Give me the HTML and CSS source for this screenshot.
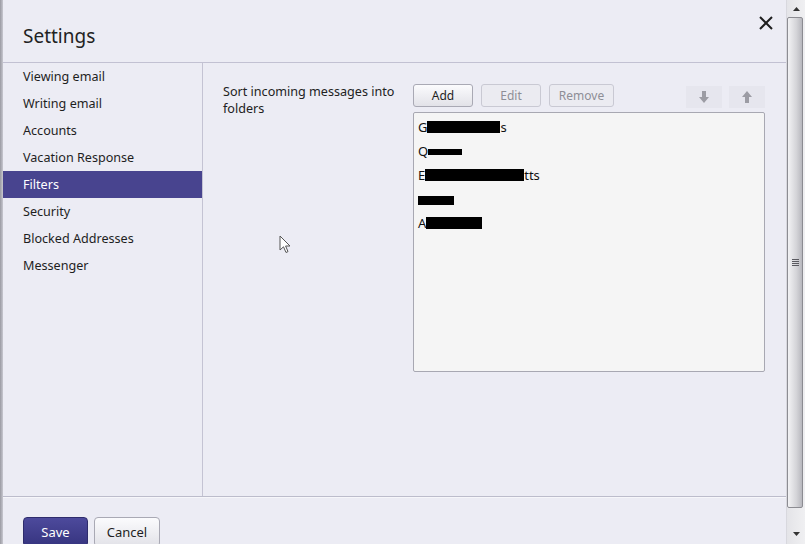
FILE: index.html
```html
<html lang="en">
	<head>
		<meta charset="utf-8" />
		<title>Settings</title>
		<link rel="stylesheet" href="styles.css">
	</head>

	<body>
		<div class="window">
			<div class="edge"></div>

			<div class="dialog">
				<div class="header">
					<h1 class="title">Settings</h1>
					<div class="close">
						<svg width="16" height="16" viewBox="0 0 16 16">
							<path d="M2 2 L14 14 M14 2 L2 14" stroke="#1e1e1e" stroke-width="2" fill="none" />
						</svg>
					</div>
				</div>

				<div class="main">
					<ul class="nav">
						<li>Viewing email</li>
						<li>Writing email</li>
						<li>Accounts</li>
						<li>Vacation Response</li>
						<li class="selected">Filters</li>
						<li>Security</li>
						<li>Blocked Addresses</li>
						<li>Messenger</li>
					</ul>

					<div class="content">
						<div class="label">Sort incoming messages into folders</div>

						<div class="filters">
							<div class="toolbar">
								<button class="btn">Add</button>
								<button class="btn disabled">Edit</button>
								<button class="btn disabled wide">Remove</button>
								<div class="spacer"></div>
								<button class="arrow">
									<svg width="12" height="12" viewBox="0 0 12 12">
										<path d="M4 0 H8 V6 H11 L6 12 L1 6 H4 Z" fill="#9c9ca4" />
									</svg>
								</button>
								<button class="arrow">
									<svg width="12" height="12" viewBox="0 0 12 12">
										<path d="M4 12 H8 V6 H11 L6 0 L1 6 H4 Z" fill="#9c9ca4" />
									</svg>
								</button>
							</div>

							<ul class="list">
								<li>G<span class="redact" style="width: 73px"></span>s</li>
								<li>Q<span class="redact thin" style="width: 34px"></span></li>
								<li>E<span class="redact" style="width: 99px"></span>tts</li>
								<li><span class="redact short" style="width: 36px"></span></li>
								<li>A<span class="redact" style="width: 56px"></span></li>
							</ul>
						</div>

						<svg class="cursor" width="14" height="20" viewBox="0 0 14 20">
							<path d="M1 1 L1 15 L4.5 11.8 L7 17.5 L9 16.6 L6.6 11 L11 11 Z" fill="#fff" stroke="#555" stroke-width="1" />
						</svg>
					</div>
				</div>

				<div class="footer">
					<button class="btn primary">Save</button>
					<button class="btn">Cancel</button>
				</div>
			</div>

			<div class="scrollbar">
				<div class="scroll-arrow">
					<svg width="7" height="4" viewBox="0 0 7 4"><path d="M0 4 L3.5 0 L7 4 Z" fill="#333" /></svg>
				</div>
				<div class="thumb">
					<div class="grip"></div>
				</div>
				<div class="scroll-arrow bottom">
					<svg width="7" height="4" viewBox="0 0 7 4"><path d="M0 0 L3.5 4 L7 0 Z" fill="#333" /></svg>
				</div>
			</div>
		</div>
	</body>
</html>
```

FILE: styles.css
```css
body {
	margin: 0;
	font-family: 'Noto Sans', 'Open Sans', Arial, sans-serif;
	font-size: 12.6px;
	color: #1e1e1e;
	background: #ececf4;
}

.window {
	display: flex;
	width: 805px;
	height: 544px;
	overflow: hidden;
}

.edge {
	width: 3px;
	background: linear-gradient(to right, #9a9aa2, #c8c8d0);
}

.dialog {
	flex: 1;
	display: flex;
	flex-direction: column;
	background: #ececf4;
}

.header {
	height: 62px;
	flex-shrink: 0;
	display: flex;
	align-items: flex-start;
	justify-content: space-between;
	border-bottom: 1px solid #c2c1d2;
}

.title {
	margin: 23px 0 0 20px;
	font-size: 19px;
	font-weight: 400;
	color: #222;
}

.close {
	margin: 15px 12px 0 0;
}

.main {
	height: 433px;
	flex-shrink: 0;
	display: flex;
	border-bottom: 1px solid #bcbccb;
}

.nav {
	list-style: none;
	margin: 0;
	padding: 0;
	width: 199px;
	border-right: 1px solid #c4c3d3;
}

.nav li {
	height: 27px;
	line-height: 28px;
	padding-left: 20px;
	overflow: hidden;
}

.nav li.selected {
	background: #48448f;
	color: #fff;
}

.content {
	flex: 1;
	display: flex;
	align-items: flex-start;
	padding: 21px 21px 0 20px;
	position: relative;
}

.label {
	width: 180px;
	margin-top: -1px;
	line-height: 17px;
	color: #222;
}

.filters {
	margin-left: 10px;
	flex: 1;
}

.toolbar {
	display: flex;
	gap: 8px;
	height: 23px;
	margin-bottom: 5px;
}

.btn {
	height: 23px;
	width: 60px;
	padding: 0;
	font-family: inherit;
	font-size: 12px;
	color: #1e1e1e;
	border: 1px solid #a9a9b4;
	border-radius: 3px;
	background: linear-gradient(#fbfbfd, #e2e2e8);
}

.btn.wide {
	width: 65px;
}

.btn.disabled {
	color: #8e8e96;
	border-color: #c9c9d3;
	background: #ebebf1;
}

.spacer {
	flex: 1;
}

.arrow {
	width: 36px;
	height: 22px;
	margin-top: 2px;
	padding: 0;
	border: none;
	background: #e6e6ee;
	display: flex;
	align-items: center;
	justify-content: center;
}

.arrow + .arrow {
	margin-left: -1px;
}

.list {
	list-style: none;
	margin: 0;
	padding: 2px 0 0 4px;
	height: 256px;
	border: 1px solid #a8a8b2;
	border-radius: 2px;
	background: #f5f5f5;
	font-size: 13px;
	color: #111;
}

.list li {
	height: 24px;
	line-height: 24px;
}

.redact {
	display: inline-block;
	height: 12px;
	background: #000;
	vertical-align: -1px;
}

.redact.thin {
	height: 6px;
	vertical-align: 1px;
}

.redact.short {
	height: 9px;
}

.cursor {
	position: absolute;
	left: 76px;
	top: 172px;
}

.footer {
	flex: 1;
	min-height: 0;
	overflow: hidden;
	display: flex;
	align-items: flex-start;
	gap: 6px;
	padding: 19px 0 0 20px;
	border-top: 1px solid #f6f6fa;
}

.footer .btn {
	flex-shrink: 0;
	height: 30px;
	width: 66px;
	font-size: 13px;
	border-radius: 4px;
}

.btn.primary {
	width: 65px;
	color: #fff;
	border-color: #2e2c6c;
	background: linear-gradient(#4d4a9c, #36347f);
}

.scrollbar {
	width: 18px;
	display: flex;
	flex-direction: column;
	background: linear-gradient(to right, #e4e4e8, #f0f0f2);
	border-left: 1px solid #d8d8de;
}

.scroll-arrow {
	height: 17px;
	display: flex;
	align-items: center;
	justify-content: center;
}

.scroll-arrow.bottom {
	height: 36px;
	align-items: flex-end;
	padding-bottom: 8px;
	box-sizing: border-box;
}

.thumb {
	flex: 1;
	margin: 0 2px 0 0;
	border: 1px solid #8c8c92;
	border-radius: 2px;
	background: linear-gradient(to right, #f2f2f4, #d4d4d8 60%, #b8b8be);
	display: flex;
	align-items: center;
	justify-content: center;
}

.grip {
	width: 7px;
	height: 7px;
	background: repeating-linear-gradient(#5a5a60 0 1px, transparent 1px 2px);
}
```
